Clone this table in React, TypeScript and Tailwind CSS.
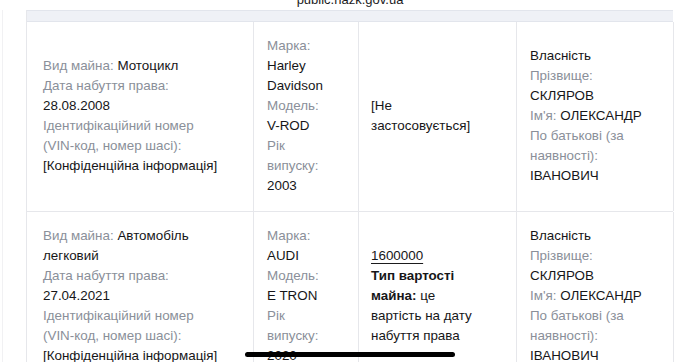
import React from "react";

const L = ({ children }: { children: React.ReactNode }) => (
  <span className="text-[#8a8f99]">{children}</span>
);

const Line = ({ children }: { children: React.ReactNode }) => (
  <div className="whitespace-nowrap">{children}</div>
);

const Cell = ({
  children,
  className = "",
}: {
  children: React.ReactNode;
  className?: string;
}) => (
  <div
    className={
      "flex flex-col justify-center border-r border-[#e6e7eb] pb-[15px] pt-[14px] text-[13.4px] leading-[20px] text-[#161618] " +
      className
    }
  >
    {children}
  </div>
);

export default function App() {
  return (
    <div
      className="relative h-[362px] w-[680px] overflow-hidden bg-white"
      style={{ fontFamily: '"Liberation Sans", Arial, sans-serif' }}
    >
      <div className="-mt-[8px] flex h-[18px] justify-center pl-[20px] text-[13px] leading-[16px] text-[#1b1b1d]">
        public.nazk.gov.ua
      </div>
      <div className="ml-[2px] border-l border-[#f1f1f3] pl-[23px]">
        <div className="w-[647px] border-l border-[#e6e7eb]">
          <div className="h-[12px] border-y border-[#e2e5ec] bg-[#eff1f6]" />
          {/* Row 1 */}
          <div className="grid grid-cols-[227px_105px_158px_157px] border-b border-[#e6e7eb]">
            <Cell className="pl-[16px]">
              <Line>
                <L>Вид майна:</L> Мотоцикл
              </Line>
              <Line>
                <L>Дата набуття права:</L>
              </Line>
              <Line>28.08.2008</Line>
              <Line>
                <L>Ідентифікаційний номер</L>
              </Line>
              <Line>
                <L>(VIN-код, номер шасі):</L>
              </Line>
              <Line>[Конфіденційна інформація]</Line>
            </Cell>
            <Cell className="pl-[13px]">
              <Line>
                <L>Марка:</L>
              </Line>
              <Line>Harley</Line>
              <Line>Davidson</Line>
              <Line>
                <L>Модель:</L>
              </Line>
              <Line>V-ROD</Line>
              <Line>
                <L>Рік</L>
              </Line>
              <Line>
                <L>випуску:</L>
              </Line>
              <Line>2003</Line>
            </Cell>
            <Cell className="pl-[12px]">
              <Line>[Не</Line>
              <Line>застосовується]</Line>
            </Cell>
            <Cell className="pl-[13px]">
              <Line>Власність</Line>
              <Line>
                <L>Прізвище:</L>
              </Line>
              <Line>СКЛЯРОВ</Line>
              <Line>
                <L>Ім'я:</L> ОЛЕКСАНДР
              </Line>
              <Line>
                <L>По батькові (за</L>
              </Line>
              <Line>
                <L>наявності):</L>
              </Line>
              <Line>ІВАНОВИЧ</Line>
            </Cell>
          </div>
          {/* Row 2 */}
          <div className="grid grid-cols-[227px_105px_158px_157px] border-b border-[#e6e7eb]">
            <Cell className="pl-[16px]">
              <Line>
                <L>Вид майна:</L> Автомобіль
              </Line>
              <Line>легковий</Line>
              <Line>
                <L>Дата набуття права:</L>
              </Line>
              <Line>27.04.2021</Line>
              <Line>
                <L>Ідентифікаційний номер</L>
              </Line>
              <Line>
                <L>(VIN-код, номер шасі):</L>
              </Line>
              <Line>[Конфіденційна інформація]</Line>
            </Cell>
            <Cell className="pl-[13px]">
              <Line>
                <L>Марка:</L>
              </Line>
              <Line>AUDI</Line>
              <Line>
                <L>Модель:</L>
              </Line>
              <Line>E TRON</Line>
              <Line>
                <L>Рік</L>
              </Line>
              <Line>
                <L>випуску:</L>
              </Line>
              <Line>2020</Line>
            </Cell>
            <Cell className="pl-[12px]">
              <Line>
                <span className="underline decoration-[#1b1b1d] underline-offset-[3px]">
                  1600000
                </span>
              </Line>
              <Line>
                <b>Тип вартості</b>
              </Line>
              <Line>
                <b>майна:</b> це
              </Line>
              <Line>вартість на дату</Line>
              <Line>набуття права</Line>
            </Cell>
            <Cell className="pl-[13px]">
              <Line>Власність</Line>
              <Line>
                <L>Прізвище:</L>
              </Line>
              <Line>СКЛЯРОВ</Line>
              <Line>
                <L>Ім'я:</L> ОЛЕКСАНДР
              </Line>
              <Line>
                <L>По батькові (за</L>
              </Line>
              <Line>
                <L>наявності):</L>
              </Line>
              <Line>ІВАНОВИЧ</Line>
            </Cell>
          </div>
        </div>
      </div>
      <div className="absolute left-[245px] top-[352px] h-[5px] w-[210px] rounded-full bg-black" />
    </div>
  );
}
